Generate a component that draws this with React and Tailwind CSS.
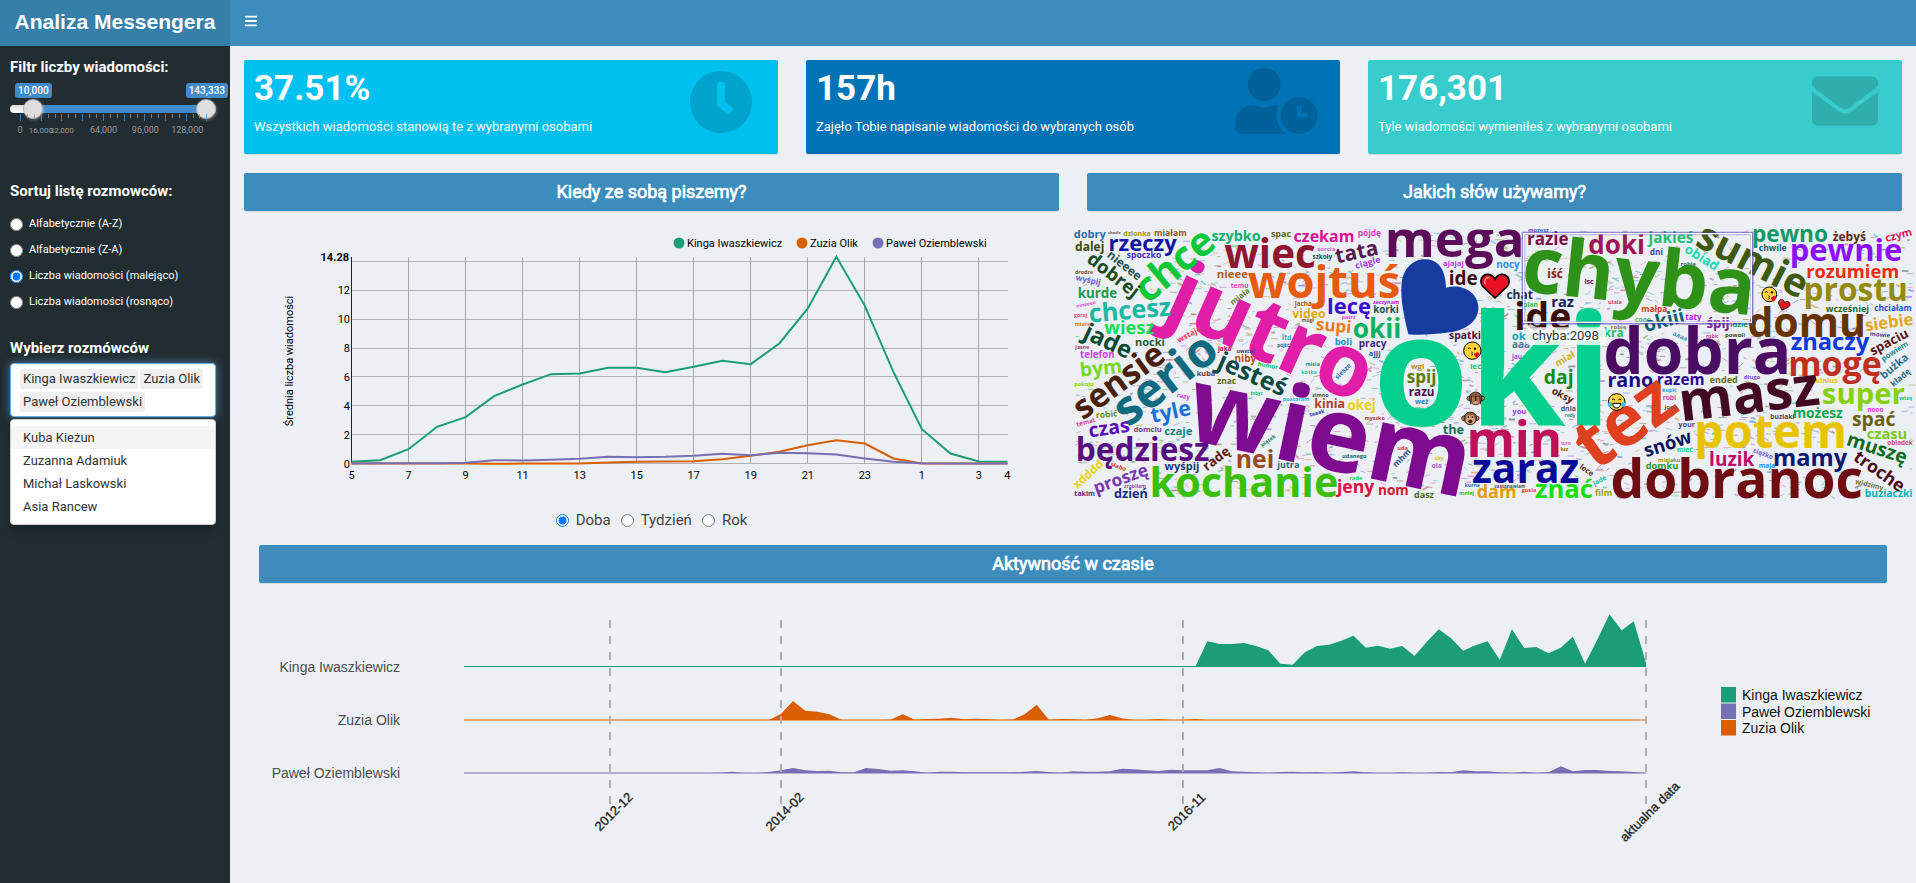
import React, { useState } from "react";
import { FaBars, FaClock, FaEnvelope, FaUserClock } from "react-icons/fa";

const GREEN = "#1b9e77";
const ORANGE = "#d95f02";
const PURPLE = "#7570b3";

/* ---------- sidebar ---------- */

const THUMB =
  "col-start-1 row-start-1 h-5 w-full appearance-none bg-transparent pointer-events-none [&::-webkit-slider-thumb]:pointer-events-auto [&::-webkit-slider-thumb]:appearance-none [&::-webkit-slider-thumb]:size-5 [&::-webkit-slider-thumb]:rounded-full [&::-webkit-slider-thumb]:bg-[#dedede] [&::-webkit-slider-thumb]:border [&::-webkit-slider-thumb]:border-[#ababab] [&::-webkit-slider-thumb]:shadow-[1px_1px_3px_rgba(255,255,255,0.3)]";

function MessageFilter() {
  const ticks = Array.from({ length: 28 }, (_, i) => i);
  const labels = [
    [0, "0"],
    [1, "16,000"],
    [2, "32,000"],
    [4, "64,000"],
    [6, "96,000"],
    [8, "128,000"],
  ];
  return (
    <fieldset>
      <legend className="text-[15px] leading-5 font-bold">Filtr liczby wiadomości:</legend>
      <div className="-mr-3 mt-1.5 flex justify-between pl-[5px] text-[10px] leading-[15px] font-medium">
        <span className="rounded-[3px] bg-[#428bca] px-[3px]">10,000</span>
        <span className="rounded-[3px] bg-[#428bca] px-[3px]">143,333</span>
      </div>
      <div className="mt-[1px] grid items-center">
        <div className="col-start-1 row-start-1 flex h-2 overflow-hidden rounded-full bg-gradient-to-b from-[#dedede] to-white">
          <div className="w-6" />
          <div className="mr-2.5 flex-1 bg-[#428bca]" />
        </div>
        <input className={THUMB} type="range" min="0" max="143333" defaultValue="10000" aria-label="Minimalna liczba wiadomości" />
        <input className={THUMB} type="range" min="0" max="143333" defaultValue="143333" aria-label="Maksymalna liczba wiadomości" />
      </div>
      <svg viewBox="0 0 206 20" className="-mt-[5px] block w-full overflow-visible" aria-hidden="true">
        {ticks.map((i) => (
          <line
            key={i}
            x1={10.5 + Math.round(i * 6.9)}
            x2={10.5 + Math.round(i * 6.9)}
            y1="0"
            y2={i % 3 === 0 ? 7 : 4}
            stroke={i % 3 === 0 ? "#428bca" : "#999"}
            strokeOpacity="0.8"
          />
        ))}
        {labels.map(([i, t]) => (
          <text key={t} x={10 + i * 20.9} y="19" textAnchor="middle" fontSize={i === 1 || i === 2 ? 8 : 9} fill="#999" fontFamily="Roboto, sans-serif">
            {t}
          </text>
        ))}
      </svg>
    </fieldset>
  );
}

const SORTS = ["Alfabetycznie (A-Z)", "Alfabetycznie (Z-A)", "Liczba wiadomości (malejąco)", "Liczba wiadomości (rosnąco)"];

function SortOptions() {
  const [sort, setSort] = useState(2);
  return (
    <fieldset className="mt-[47px]">
      <legend className="text-[15px] leading-5 font-bold">Sortuj listę rozmowców:</legend>
      <div className="mt-[15px] flex flex-col gap-2.5">
        {SORTS.map((s, i) => (
          <label key={s} className="flex h-4 items-center gap-1.5 text-[11px] leading-4">
            <input type="radio" name="sort" className="m-0 size-[13px]" checked={sort === i} onChange={() => setSort(i)} />
            {s}
          </label>
        ))}
      </div>
    </fieldset>
  );
}

function PeoplePicker() {
  return (
    <div className="mt-7">
      <label htmlFor="people" className="block text-[15px] leading-5 font-bold">
        Wybierz rozmówców
      </label>
      <div className="mt-[5px] flex h-[54px] flex-wrap content-start gap-x-0.5 gap-y-[3px] rounded-[4px] border border-[#66afe9] bg-white py-[5px] pl-[9px] text-[13px] leading-5 text-[#333] shadow-[0_0_8px_rgba(102,175,233,0.6)]">
        {["Kinga Iwaszkiewicz", "Zuzia Olik", "Paweł Oziemblewski"].map((n) => (
          <span key={n} className="rounded-[3px] bg-[#efefef] px-[3px] whitespace-nowrap">
            {n}
          </span>
        ))}
        <input id="people" className="w-1 outline-none" />
      </div>
      <div role="listbox" aria-label="Wybierz rozmówców" className="mt-0.5 flex flex-col rounded-[4px] border border-[#ccc] bg-white py-[6px] text-[13px] text-[#333] shadow-[0_6px_12px_rgba(0,0,0,0.18)]">
        {["Kuba Kieżun", "Zuzanna Adamiuk", "Michał Laskowski", "Asia Rancew"].map((n, i) => (
          <button key={n} role="option" aria-selected={i === 0} className="px-3 text-left leading-[23px] aria-selected:bg-[#f5f5f5]">
            {n}
          </button>
        ))}
      </div>
    </div>
  );
}

/* ---------- hourly chart ---------- */

const HOURLY = [
  { color: GREEN, v: [5, 10, 43, 110, 139, 202, 237, 268, 270, 287, 287, 274, 290, 308, 298, 360, 465, 620, 473, 275, 103, 30, 6, 5] },
  { color: ORANGE, v: [0, 0, 0, 0, 0, -1, 0, 0, 0, 3, 5, 6, 7, 13, 23, 35, 55, 70, 60, 15, 0, 0, 0, 0] },
  { color: PURPLE, v: [0, 1, 1, 1, 2, 10, 9, 11, 14, 20, 19, 20, 23, 29, 25, 32, 31, 27, 15, 5, 1, 0, 0, 0] },
];

function HourlyChart() {
  const X = (i) => 107.5 + i * 28.52;
  const Y = (v) => 252.5 - v / 3;
  const hours = [5, 7, 9, 11, 13, 15, 17, 19, 21, 23, 1, 3];
  return (
    <svg viewBox="0 0 815 296" className="block w-full" fontFamily="Roboto, sans-serif" fontSize="11" role="img" aria-label="Średnia liczba wiadomości w ciągu doby">
      {[0, 2, 4, 6, 8, 10, 12, 14].map((t) => (
        <g key={t}>
          <line x1="108" x2="764" y1={Math.round(252 - t * 14.43) + 0.5} y2={Math.round(252 - t * 14.43) + 0.5} stroke="#b0b3b7" />
          {t < 14 && (
            <text x="106" y={256.5 - t * 14.43} textAnchor="end">
              {t}
            </text>
          )}
        </g>
      ))}
      {hours.map((h, i) => (
        <g key={h}>
          <line x1={Math.floor(X(i * 2)) + 0.5} x2={Math.floor(X(i * 2)) + 0.5} y1="46" y2="252" stroke={i ? "#a5a8ab" : "#222"} />
          <text x={X(i * 2)} y="267.5" textAnchor="middle">
            {h}
          </text>
        </g>
      ))}
      <text x={X(23)} y="267.5" textAnchor="middle">
        4
      </text>
      <text x="105" y="50" textAnchor="end" fontWeight="700">
        14.28
      </text>
      <text transform="translate(49 150) rotate(-90)" textAnchor="middle">
        Średnia liczba wiadomości
      </text>
      {HOURLY.map((s) => (
        <polyline key={s.color} fill="none" stroke={s.color} strokeWidth="2" points={s.v.map((v, i) => `${X(i)},${Y(v)}`).join(" ")} />
      ))}
      {[
        [436, GREEN, "Kinga Iwaszkiewicz"],
        [559, ORANGE, "Zuzia Olik"],
        [635, PURPLE, "Paweł Oziemblewski"],
      ].map(([x, c, t]) => (
        <g key={t}>
          <circle cx={x - 1} cy="32" r="5.5" fill={c} />
          <text x={x + 7} y="36">
            {t}
          </text>
        </g>
      ))}
    </svg>
  );
}

/* ---------- word cloud ---------- */

const ADVANCE = {
  a: 0.604, b: 0.633, c: 0.514, d: 0.633, e: 0.59, f: 0.387, g: 0.565, h: 0.657, i: 0.305, j: 0.305, k: 0.62, l: 0.305, m: 0.98,
  n: 0.657, o: 0.62, p: 0.633, q: 0.633, r: 0.454, s: 0.497, t: 0.434, u: 0.657, v: 0.568, w: 0.856, x: 0.578, y: 0.568, z: 0.488,
  ą: 0.604, ć: 0.514, ę: 0.59, ł: 0.33, ń: 0.657, ó: 0.62, ś: 0.497, ż: 0.488,
};
const sizeFor = (word, width) => width / ([...word].reduce((sum, ch) => sum + (ADVANCE[ch] ?? 0.6), 0) - 0.1);

// word, centre x, centre y of the lower-case band, width, rotation, colour
const LEFT = [
  ["oki", 1268, 488, 672, 0, "#05cf8c"], ["mega", 1154, 70, 405, 0, "#5c0d5a"], ["jutro", 598, 356, 624, 24, "#e01ea8"],
  ["wiem", 777, 662, 830, 12, "#7d0a8f"], ["dobry", 59, 45, 92, 0, "#2a6ea6"], ["chwile", 133, 40, 38, 0, "#6a4a4a"],
  ["dzionka", 201, 41, 82, 0, "#9a9a10"], ["miałam", 301, 42, 98, 0, "#8a5a2a"], ["szybko", 498, 50, 142, 0, "#10b070"],
  ["spac", 633, 43, 58, 0, "#5a6a10"], ["czekam", 762, 54, 178, 0, "#e0109a"], ["pójdę", 898, 42, 68, 0, "#e040c0"],
  ["dalej", 59, 82, 84, 0, "#3a4a10"], ["rzeczy", 218, 74, 198, 0, "#1515a0"], ["chce", 318, 140, 264, -40, "#0ac83a"],
  ["nieeee", 162, 138, 115, 38, "#2a5050"], ["spoczko", 222, 108, 100, 0, "#4a30c0"], ["dobrej", 128, 168, 175, 38, "#1a4a20"],
  ["drodze", 42, 157, 52, 0, "#6a5a20"], ["wyśpij", 54, 182, 74, 12, "#6060d0"], ["kurde", 82, 222, 115, 0, "#1a9a50"],
  ["nineeee", 48, 254, 60, -12, "#e050d0"], ["chcesz", 180, 276, 240, -5, "#1ab8a0"], ["wiesz", 178, 328, 145, 0, "#10e050"],
  ["goraj", 32, 288, 38, 0, "#e05080"], ["miarę", 38, 315, 44, 0, "#e87030"], ["wiec", 600, 110, 262, 0, "#8f1530"],
  ["sorcia", 769, 87, 52, 0, "#c060d0"], ["szkoły", 757, 111, 56, 0, "#2a4a50"], ["tata", 861, 100, 125, -12, "#5a1a50"],
  ["ciągle", 894, 130, 75, -15, "#a040f0"], ["nieee", 487, 165, 90, 0, "#b05a20"], ["wojtuś", 762, 196, 445, 0, "#e85a10"],
  ["temu", 509, 199, 50, 0, "#e040c0"], ["miała", 511, 231, 66, -38, "#6a7a20"], ["jacha", 700, 254, 50, 0, "#a05a30"],
  ["video", 717, 284, 98, 0, "#e0a810"], ["lecę", 837, 264, 125, 0, "#3a10d0"], ["zaczynam", 948, 247, 78, 0, "#c010d0"],
  ["korki", 948, 270, 74, 0, "#1a5050"], ["ajajaj", 1150, 131, 60, 0, "#c040e0"], ["ide", 1180, 180, 82, 0, "#3a1015"],
  ["okii", 921, 332, 138, 0, "#10b060"], ["supi", 791, 321, 102, 5, "#e87a20"], ["patrz", 836, 293, 40, 0, "#e040e0"],
  ["mógł", 713, 303, 35, 0, "#7a5a30"], ["boli", 820, 367, 50, 0, "#1090c0"], ["pracy", 908, 372, 80, 0, "#3a2a80"],
  ["ajjj", 914, 402, 32, 0, "#3050a0"], ["spatki", 1185, 350, 92, 0, "#4a1040"], ["jade", 112, 368, 145, 25, "#0a4a30"],
  ["nocki", 240, 368, 86, 0, "#2a5a30"], ["wstaje", 358, 345, 78, -28, "#e04060"], ["ltd", 650, 355, 27, 0, "#30b0d0"],
  ["pójść", 640, 378, 35, 0, "#3a5a5a"], ["jasne", 37, 382, 42, 0, "#c03060"], ["telefon", 82, 405, 100, 0, "#d040e0"],
  ["bym", 93, 448, 120, -6, "#7ad820"], ["sensie", 150, 488, 305, -36, "#4a2008"], ["serio", 291, 484, 340, -38, "#106a80"],
  ["jaka", 464, 389, 38, 0, "#a01060"], ["uwstaj", 526, 394, 52, 0, "#3a3a6a"], ["niby", 526, 418, 62, 0, "#c04a20"],
  ["kuba", 408, 461, 52, 0, "#5a3a4a"], ["jesteś", 545, 468, 212, 24, "#0a4a40"], ["humor", 593, 438, 58, 10, "#10c060"],
  ["misia", 728, 433, 42, 0, "#5a7a30"], ["kotka", 717, 457, 44, 0, "#20c0c0"], ["siesze", 820, 455, 56, -45, "#3070c0"],
  ["znac", 470, 484, 54, 0, "#5a6a10"], ["pokoju", 42, 494, 58, 0, "#8ad020"], ["zimno", 751, 528, 48, 0, "#305060"],
  ["okej", 875, 560, 82, 0, "#e8d010"], ["kinia", 779, 553, 88, 0, "#b0401a"], ["poataram", 678, 540, 78, 0, "#30b0e0"],
  ["żebyc", 560, 522, 36, 0, "#20c060"], ["tyle", 303, 580, 115, -12, "#1a70d8"], ["razy", 340, 530, 38, 12, "#c040e0"],
  ["robić", 110, 585, 62, -5, "#6a9020"], ["temat", 48, 608, 55, -15, "#d04090"], ["czas", 118, 628, 118, -8, "#5a10b8"],
  ["domciu", 233, 631, 82, 0, "#7a3a90"], ["czaje", 325, 637, 82, 0, "#108a80"], ["taaak", 741, 580, 44, -15, "#2040a0"],
  ["myszko", 914, 596, 60, 0, "#a04050"], ["piątek", 595, 663, 50, -35, "#208060"], ["będziesz", 218, 696, 390, 0, "#5a0f80"],
  ["radę", 440, 718, 88, -38, "#5a1a10"], ["wyśpij", 336, 740, 102, 0, "#1a3a70"], ["nei", 555, 723, 108, 0, "#984a20"],
  ["jutra", 655, 738, 64, 0, "#2a6080"], ["udanego", 853, 708, 70, 0, "#106a70"], ["proszę", 153, 780, 165, -20, "#7a3ab0"],
  ["xdddd", 56, 765, 104, -42, "#e8d010"], ["słabo", 145, 741, 46, 20, "#e03030"], ["zrobiłam", 195, 799, 66, 0, "#a050a0"],
  ["takim", 44, 823, 60, 0, "#5a2a70"], ["dzień", 183, 824, 98, 0, "#1a2a80"], ["kochanie", 522, 797, 556, 0, "#3abf0a"],
  ["jeny", 857, 804, 108, 0, "#e01040"], ["rade", 858, 776, 38, 0, "#20d060"], ["nom", 970, 813, 88, 0, "#d01a30"],
  ["dasz", 1062, 827, 58, 0, "#5a6a10"], ["the", 1150, 632, 60, 0, "#107060"], ["mhm", 996, 715, 64, -45, "#2a4a80"],
  ["ola", 1100, 738, 28, 0, "#9070d0"], ["oby", 1107, 715, 26, 0, "#e0c010"], ["uda", 998, 686, 30, 0, "#e04050"],
  ["mniej", 1190, 822, 44, 0, "#20c030"], ["kurna", 1207, 798, 44, 0, "#3060c0"], ["spij", 1055, 475, 84, 0, "#5a7a10"],
  ["wgl", 1043, 441, 38, 0, "#b08a30"], ["razu", 1055, 520, 74, 0, "#4a0a50"], ["weż", 1055, 545, 38, 0, "#3080c0"],
  ["leć", 1217, 440, 30, 0, "#30c030"], ["min", 1333, 670, 272, 0, "#c0105a"], ["zaraz", 1367, 757, 310, 0, "#0a0a98"],
  ["dam", 1280, 820, 115, 0, "#e89a10"],
];
const RIGHT = [
  ["możesz", 175, 32, 62, 0, "#4060d0"], ["razie", 203, 60, 120, 0, "#7a1048"], ["doki", 410, 80, 162, 0, "#a01555"],
  ["jakieś", 573, 56, 130, 0, "#20c070"], ["dni", 529, 99, 38, 0, "#4040b0"], ["obiad", 664, 115, 108, 32, "#20d8b0"],
  ["sumie", 815, 128, 345, 27, "#3f5a10"], ["pewno", 930, 48, 222, 0, "#0f9a68"], ["żebyś", 1108, 52, 95, 0, "#5a2a10"],
  ["czym", 1256, 47, 78, -15, "#e02050"], ["chwile", 878, 87, 82, 0, "#1a5a5a"], ["pewnie", 1098, 99, 330, 0, "#8a10ff"],
  ["rozumiem", 1118, 158, 275, 0, "#f02a10"], ["nocy", 84, 136, 68, 0, "#3090e0"], ["iść", 225, 165, 42, 0, "#7a1a10"],
  ["isc", 327, 187, 26, 0, "#5a1050"], ["robie", 625, 132, 46, 0, "#4a5a50"], ["chyba", 476, 186, 678, 6, "#2f9218"],
  ["chat", 119, 226, 75, 0, "#1a3050"], ["raz", 248, 250, 64, 0, "#1a1a60"], ["plan", 152, 255, 42, 0, "#20c040"],
  ["ide", 188, 300, 160, 0, "#3a1005"], ["małpa", 523, 270, 76, 0, "#d03a20"], ["cooo", 489, 300, 46, 0, "#50c030"],
  ["ulala", 405, 248, 40, 0, "#c05060"], ["okiii", 553, 305, 120, -14, "#0a6070"], ["taty", 640, 293, 46, 0, "#b020e0"],
  ["śpij", 714, 314, 66, 0, "#8020a0"], ["idzie", 777, 316, 50, 0, "#209a50"], ["robię", 416, 322, 46, 0, "#8a7a20"],
  ["akra", 390, 341, 78, 0, "#20c070"], ["oks", 125, 352, 55, 0, "#20a0b0"], ["aaa", 123, 375, 52, 0, "#3a7a8a"],
  ["jau", 111, 412, 28, 0, "#8060d0"], ["miał", 255, 418, 62, -30, "#d0b020"], ["daj", 236, 476, 84, 0, "#1a8a10"],
  ["oksy", 247, 528, 66, 28, "#4a1a20"], ["dnia", 265, 568, 44, 0, "#4a5a60"], ["you", 118, 576, 40, 0, "#9040e0"],
  ["redy", 270, 586, 30, 0, "#3a8a6a"], ["dobra", 652, 411, 545, 0, "#4a0d63"], ["domu", 980, 317, 342, 0, "#663300"],
  ["wcześniej", 1102, 268, 128, 0, "#1a6a30"], ["chciałam", 1239, 267, 110, 0, "#2050d0"], ["siebie", 1228, 310, 142, -8, "#e0a820"],
  ["prostu", 1127, 216, 305, 0, "#958a10"], ["znaczy", 1050, 372, 230, 0, "#0a3ad8"], ["mowie", 1200, 345, 60, 5, "#3a4a90"],
  ["spaciu", 1228, 368, 122, -28, "#5a1515"], ["powiem", 1245, 395, 88, -33, "#2a8a8a"], ["mogę", 1065, 439, 272, 0, "#c03020"],
  ["bużka", 1244, 440, 96, -40, "#2a7090"], ["kładę", 1262, 474, 68, -40, "#2a6a80"], ["kinius", 1040, 484, 66, 0, "#e8c020"],
  ["rano", 451, 485, 132, 0, "#1a0a80"], ["razem", 602, 484, 138, 0, "#2a0a90"], ["ended", 731, 481, 80, 0, "#6a6a10"],
  ["długo", 816, 472, 48, 0, "#7a50d0"], ["powoli", 765, 347, 58, 0, "#3a4a20"], ["robic", 697, 350, 36, 0, "#c03a90"],
  ["aaaa", 600, 350, 45, 25, "#3a90c0"], ["masz", 808, 534, 408, -7, "#430a24"], ["tez", 442, 616, 300, -36, "#df4020"],
  ["super", 1150, 527, 240, 0, "#88d010"], ["wizę", 1277, 535, 38, 0, "#20c090"], ["nooo", 1186, 570, 46, 0, "#e040e0"],
  ["spać", 1181, 602, 125, 0, "#6a6010"], ["możesz", 1013, 583, 146, 0, "#10a850"], ["buziaki", 907, 592, 70, 0, "#5a3a60"],
  ["potem", 872, 647, 445, 0, "#e8c400"], ["your", 620, 614, 48, 0, "#3a4a80"], ["kupić", 568, 512, 42, 0, "#3090e0"],
  ["robi", 568, 536, 38, 0, "#c050a0"], ["jooo", 573, 562, 38, 0, "#7a5a50"], ["snów", 564, 675, 142, -18, "#0d1660"],
  ["mieć", 614, 692, 46, 0, "#20d060"], ["czasu", 1221, 645, 118, 0, "#7ac820"], ["obiadek", 1260, 671, 76, 0, "#d04a60"],
  ["muszę", 1190, 688, 180, 18, "#0a6a20"], ["troche", 1196, 757, 168, 35, "#4a0a18"], ["widzimy", 1168, 795, 85, 14, "#7a6a20"],
  ["buziaczki", 1226, 823, 142, 0, "#10b0b8"], ["mamy", 990, 718, 215, 0, "#0a1870"], ["ciężko", 849, 703, 62, 20, "#7060d0"],
  ["luzik", 755, 723, 130, 0, "#c00a70"], ["maja", 861, 739, 48, 0, "#3090e0"], ["dobranoc", 770, 792, 742, 0, "#6e0d12"],
  ["domku", 546, 738, 94, 0, "#2a9a20"], ["misiaku", 568, 720, 66, 0, "#7aa020"], ["znać", 252, 813, 166, 0, "#1ade10"],
  ["film", 371, 822, 48, 0, "#a09a20"], ["lece", 319, 752, 44, 35, "#5a3020"], ["turn", 258, 671, 28, 0, "#e050c0"],
  ["luz", 253, 690, 22, 0, "#5a6a20"], ["gosia", 147, 811, 42, 0, "#e84020"], ["zastanawiam", 90, 800, 90, 0, "#3a5a60"],
  ["jade", 360, 783, 40, -28, "#20c0a0"],
];

function Words({ items }) {
  return items.map(([t, x, y, w, r, c], i) => {
    const s = Math.round(sizeFor(t, w));
    return (
      <text key={i} transform={`translate(${x} ${y}) rotate(${r})`} y={Math.round(s * 0.27)} fontSize={s} fill={c} textAnchor="middle">
        {t}
      </text>
    );
  });
}

const SPECK_COLORS = ["#e040c0", "#20b060", "#3060d0", "#e08020", "#7a3a20", "#20b0c0", "#8040d0", "#6a8a20", "#c03040", "#2a4a60"];

// specks keep clear of the smaller words so that those stay legible
const BOXES = [...LEFT, ...RIGHT.map(([t, x, ...rest]) => [t, x + 1230, ...rest])]
  .map(([t, x, y, w, r]) => ({ x, y, w: w / 2 + 8, h: sizeFor(t, w) * 0.5 + 3, s: sizeFor(t, w), r: (r * Math.PI) / 180 }))
  .filter((b) => b.s < 90);
const isFree = (px, py) =>
  !BOXES.some((b) => {
    const dx = px - b.x;
    const dy = py - b.y;
    return Math.abs(dx * Math.cos(b.r) + dy * Math.sin(b.r)) < b.w && Math.abs(dy * Math.cos(b.r) - dx * Math.sin(b.r)) < b.h;
  });
const SPECKS = (() => {
  let seed = 7;
  const rnd = () => (seed = (seed * 16807) % 2147483647) / 2147483647;
  return Array.from({ length: 2800 }, () => ({
    x: 14 + rnd() * 2510,
    y: 32 + rnd() * 800,
    l: 8 + rnd() * 14,
    a: (rnd() - 0.5) * 1.6 * (rnd() > 0.5 ? 1 : 0),
    w: rnd() > 0.85 ? 5 : 2.5,
    c: SPECK_COLORS[Math.floor(rnd() * SPECK_COLORS.length)],
  })).filter((p) => isFree(p.x, p.y) && isFree(p.x + p.l, p.y));
})();

function Heart({ x, y, s = 1, r = 0 }) {
  return (
    <g transform={`translate(${x} ${y}) rotate(${r}) scale(${s})`}>
      <path d="M0 36 L-36 2 C-50 -16 -38 -36 -20 -35 C-8 -34 -1 -24 0 -19 C2 -26 10 -36 22 -35 C42 -33 48 -12 36 2Z" fill="#e81224" stroke="#000" strokeWidth="5" strokeLinejoin="round" />
      <path d="M-30 -8 C-32 -18 -26 -26 -18 -26" fill="none" stroke="#ff7a80" strokeWidth="5" strokeLinecap="round" />
    </g>
  );
}

function Kiss({ x, y, r }) {
  return (
    <g transform={`translate(${x} ${y})`}>
      <circle r={r} fill="#ffd23c" stroke="#000" strokeWidth="3" />
      <path d="M-13 -6 q4 -5 8 0" fill="none" stroke="#000" strokeWidth="3" />
      <circle cx="8" cy="-6" r="3.5" />
      <path d="M-3 4 q7 2 1 5 q7 3 -1 6" fill="none" stroke="#000" strokeWidth="2.5" />
      <path d="M12 22 l-7 -9 q-1 -7 6 -6 q4 -5 9 0 q4 5 -8 15z" fill="#e81224" />
    </g>
  );
}

function Monkey({ x, y, covered }) {
  return (
    <g transform={`translate(${x} ${y})`} stroke="#000" strokeWidth="2">
      <circle cx="-19" cy="0" r="7" fill="#c98c62" />
      <circle cx="19" cy="0" r="7" fill="#c98c62" />
      <circle r="19" fill="#8a5a3c" />
      <ellipse cy="6" rx="14" ry="11" fill="#dca47a" stroke="none" />
      <circle cx="-6" cy="-4" r="6" fill="#dca47a" stroke="none" />
      <circle cx="6" cy="-4" r="6" fill="#dca47a" stroke="none" />
      {covered ? (
        <path d="M-15 18 L-12 -7 H-1 V8 M15 18 L12 -7 H1 V8" fill="#a8714e" />
      ) : (
        <g>
          <circle cx="-6" cy="-4" r="1.5" />
          <circle cx="6" cy="-4" r="1.5" />
          <ellipse cy="9" rx="5" ry="4" fill="#5a2a1a" />
        </g>
      )}
    </g>
  );
}

function WordCloud() {
  return (
    <svg viewBox="9 27 2529 810" className="block w-full overflow-hidden" fontFamily="'Open Sans', 'Noto Sans', sans-serif" fontWeight="700" role="img" aria-label="Chmura słów">
      <g opacity="0.5">
        {SPECKS.map((p, i) => (
          <line key={i} x1={p.x} y1={p.y} x2={p.x + p.l * Math.cos(p.a)} y2={p.y + p.l * Math.sin(p.a)} stroke={p.c} strokeWidth={p.w} />
        ))}
      </g>
      <Words items={LEFT} />
      <path d="M1015 343C1003 290 990 240 995 190C1000 140 1035 115 1070 118C1110 122 1127 155 1128 203C1175 190 1222 215 1225 260C1227 305 1185 330 1140 337C1095 343 1050 347 1015 343Z" fill="#153c9e" />
      <Kiss x={1207} y={392} r={26} />
      <Monkey x={1217} y={535} covered />
      <Monkey x={1201} y={595} />
      <g transform="translate(1230 0)">
        <Words items={RIGHT} />
        <Heart x={45} y={198} />
        <Kiss x={868} y={223} r={22} />
        <Heart x={911} y={256} s={0.42} r={18} />
        <g transform="translate(410 546)">
          <circle r="25" fill="#ffd23c" stroke="#000" strokeWidth="3" />
          <path d="M-14 -6 q5 -6 9 0 M5 -6 q5 -6 9 0" fill="none" stroke="#000" strokeWidth="3" />
          <path d="M-12 4 H12 Q10 18 0 18 Q-10 18 -12 4Z" fill="#fff" stroke="#000" strokeWidth="3" />
          <circle cx="-20" cy="8" r="7" fill="#3fc1f0" />
          <circle cx="20" cy="8" r="7" fill="#3fc1f0" />
        </g>
        <rect x="130" y="40" width="686" height="269" fill="none" stroke="#5548b8" strokeWidth="12" strokeOpacity="0.25" />
        <rect x="130" y="40" width="686" height="269" fill="none" stroke="#4438a0" strokeWidth="7" strokeOpacity="0.5" />
        <rect x="131" y="41" width="683" height="266" fill="none" stroke="#fff" strokeWidth="4" />
        <path d="M141 322 H170 L150 312Z" fill="#fff" fillOpacity="0.8" />
        <rect x="138" y="322" width="240" height="53" rx="12" fill="#fff" fillOpacity="0.8" />
        <text x="156" y="361" fontFamily="Roboto, sans-serif" fontWeight="400" fontSize="39" fill="#333">
          chyba:2098
        </text>
      </g>
    </svg>
  );
}

/* ---------- activity timeline ---------- */

const area = (sparse) => Array.from({ length: 98 }, (_, i) => sparse[i] ?? 0);
const GREEN_TAIL = [0, 77, 69, 69, 72, 63, 50, 10, 7, 44, 63, 67, 79, 94, 58, 64, 55, 63, 33, 75, 113, 86, 49, 65, 77, 22, 113, 57, 60, 41, 58, 91, 10, 82, 158, 110, 137, 12];
const ROWS = [
  { name: "Kinga Iwaszkiewicz", y: 76, color: GREEN, line: 1, v: area(Object.fromEntries(GREEN_TAIL.map((v, i) => [60 + i, v]))) },
  { name: "Zuzia Olik", y: 129, color: ORANGE, line: 0.5, v: area({ 26: 18, 27: 57, 28: 28, 29: 25, 30: 17, 35: 1, 36: 17, 37: 1, 38: 3, 39: 4, 40: 7, 41: 2, 42: 4, 43: 2, 45: 1, 46: 17, 47: 46, 48: 1, 49: 3, 50: 2, 52: 5, 53: 15, 54: 5, 57: 3, 60: 3 }) },
  { name: "Paweł Oziemblewski", y: 182, color: PURPLE, line: 0.5, v: area({ 21: 1, 22: 4, 25: 3, 26: 8, 27: 15, 28: 8, 29: 6, 30: 7, 31: 2, 32: 2, 33: 15, 34: 12, 35: 7, 36: 8, 37: 5, 38: 1, 39: 4, 40: 4, 41: 2, 42: 2, 43: 2, 44: 2, 45: 2, 46: 4, 47: 6, 48: 3, 49: 1, 50: 5, 51: 4, 52: 4, 53: 5, 54: 13, 55: 11, 56: 8, 57: 6, 58: 10, 59: 8, 60: 8, 61: 8, 62: 15, 63: 5, 64: 4, 65: 2, 67: 3, 68: 4, 69: 2, 70: 3, 72: 3, 73: 5, 74: 2, 77: 2, 80: 3, 81: 2, 82: 8, 83: 5, 84: 5, 85: 2, 87: 4, 89: 2, 90: 20, 91: 5, 92: 9, 93: 9, 94: 6, 95: 5, 96: 3 }) },
];

function Timeline() {
  const X = (i) => 205 + (i * 1182) / 97;
  return (
    <svg viewBox="0 0 1628 270" className="block w-full" fontFamily="'Liberation Sans', Arial, sans-serif" fontSize="14" role="img" aria-label="Aktywność w czasie">
      {ROWS.map((r) => (
        <g key={r.name}>
          <text x="141" y={r.y + 5} textAnchor="end" fill="#4d4d4d">
            {r.name}
          </text>
          <line x1="205" x2="1387" y1={r.line === 1 ? r.y - 0.5 : r.y} y2={r.line === 1 ? r.y - 0.5 : r.y} stroke={r.color} strokeOpacity={r.line} strokeWidth={r.line === 1 ? 1 : 2} />
          <polygon fill={r.color} points={`205,${r.y} ${r.v.map((v, i) => `${X(i)},${r.y - v / 3}`).join(" ")} 1387,${r.y}`} />
        </g>
      ))}
      {[
        [351, "2012-12"],
        [522, "2014-02"],
        [924, "2016-11"],
        [1387, "aktualna data"],
      ].map(([x, t]) => (
        <g key={t}>
          <line x1={x} x2={x} y1="29" y2="213" stroke="#b0b0b0" strokeWidth="2" strokeDasharray="8 8" />
          <text transform={`translate(${x + 4} 221) rotate(-45)`} y="4" textAnchor="middle" fill="#222" stroke="#222" strokeWidth="0.3" fontSize="13">
            {t}
          </text>
        </g>
      ))}
      {[
        [GREEN, "Kinga Iwaszkiewicz"],
        [PURPLE, "Paweł Oziemblewski"],
        [ORANGE, "Zuzia Olik"],
      ].map(([c, t], i) => (
        <g key={t}>
          <rect x="1462" y={96 + i * 16.5} width="15" height="15.5" fill={c} />
          <text x="1483" y={109 + i * 16.5} fill="#111">
            {t}
          </text>
        </g>
      ))}
    </svg>
  );
}

/* ---------- page ---------- */

function StatCard({ value, text, className, children }) {
  return (
    <section className={`flex h-[94px] justify-between rounded-[2px] px-2.5 text-white shadow-[0_1px_1px_rgba(0,0,0,0.1)] ${className}`}>
      <div>
        <p className="pt-[9px] text-[35px] leading-10 font-bold">{value}</p>
        <p className="mt-2.5 text-[13px] leading-4">{text}</p>
      </div>
      <div className="pr-3 text-black/15">{children}</div>
    </section>
  );
}

function Banner({ children }) {
  return (
    <h2 className="rounded-[2px] bg-[#3c8dbc] py-2 text-center text-[18px] leading-[22px] font-normal text-white shadow-[0_1px_1px_rgba(0,0,0,0.1)] [-webkit-text-stroke:0.7px_white]">
      {children}
    </h2>
  );
}

export default function App() {
  const [span, setSpan] = useState("Doba");
  return (
    <div className="flex min-h-screen flex-col bg-[#ecf0f5] font-['Roboto',sans-serif] text-[#333]">
      <header className="flex h-[46px] shrink-0 bg-[#3c8dbc] text-white">
        <h1 className="flex w-[230px] shrink-0 items-center justify-center bg-[#367fa9] pb-0.5 font-['Liberation_Sans',Arial,sans-serif] text-[21px] font-bold">
          <a href="#top">Analiza Messengera</a>
        </h1>
        <button aria-label="Menu" className="-mt-1 px-3.5 text-[14px]">
          <FaBars />
        </button>
      </header>
      <div className="flex flex-1">
        <aside className="w-[230px] shrink-0 bg-[#222d32] pt-[11px] pr-3.5 pl-2.5 text-white">
          <MessageFilter />
          <SortOptions />
          <PeoplePicker />
        </aside>
        <main className="min-w-0 flex-1 px-3.5 pt-3.5">
          <div className="grid grid-cols-3 gap-7">
            <StatCard value="37.51%" text="Wszystkich wiadomości stanowią te z wybranymi osobami" className="bg-[#00c0ef]">
              <FaClock className="mt-2.5 mr-[3px] size-16" />
            </StatCard>
            <StatCard value="157h" text="Zajęło Tobie napisanie wiadomości do wybranych osób" className="bg-[#0073b7]">
              <FaUserClock className="mt-2 h-[66px] w-[83px]" />
            </StatCard>
            <StatCard value="176,301" text="Tyle wiadomości wymieniłeś z wybranymi osobami" className="bg-[#39cccc]">
              <FaEnvelope className="mt-2 mr-0.5 size-[66px]" />
            </StatCard>
          </div>
          <div className="mt-[19px] grid grid-cols-2 gap-7">
            <section>
              <Banner>Kiedy ze sobą piszemy?</Banner>
              <HourlyChart />
              <div className="flex h-[26px] items-center justify-center gap-2.5 text-[15px] text-[#444]">
                {["Doba", "Tydzień", "Rok"].map((s) => (
                  <label key={s} className="flex items-center gap-[7px]">
                    <input type="radio" name="span" className="m-0 size-[13px]" checked={span === s} onChange={() => setSpan(s)} />
                    {s}
                  </label>
                ))}
              </div>
            </section>
            <section>
              <Banner>Jakich słów używamy?</Banner>
              <div className="-mx-3.5 pt-[18px]">
                <WordCloud />
              </div>
            </section>
          </div>
          <section className="mt-3 px-[15px]">
            <Banner>Aktywność w czasie</Banner>
            <div className="pt-2">
              <Timeline />
            </div>
          </section>
        </main>
      </div>
    </div>
  );
}
